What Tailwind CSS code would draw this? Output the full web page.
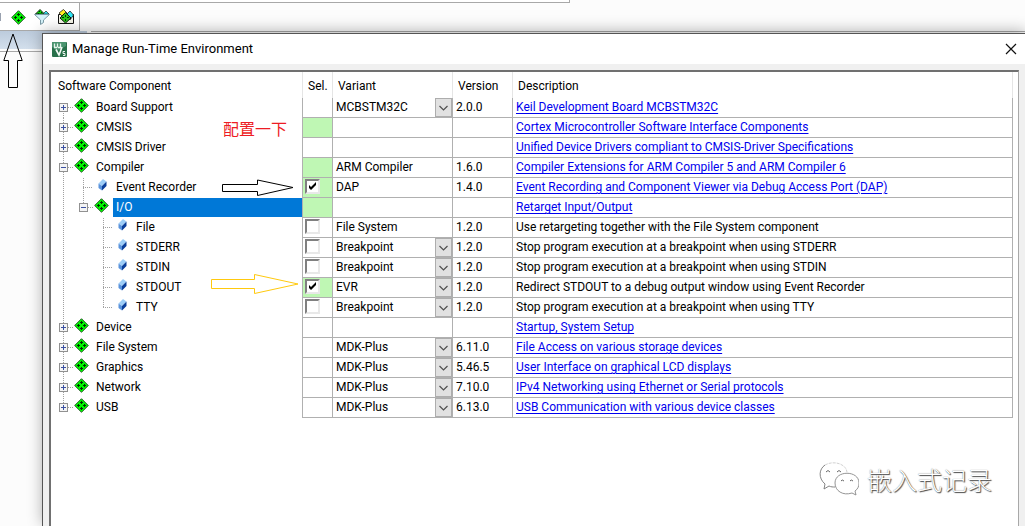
<!DOCTYPE html>
<html lang="en">
<head>
<meta charset="utf-8">
<title>Manage Run-Time Environment</title>
<script src="https://cdn.jsdelivr.net/npm/@tailwindcss/browser@4"></script>
</head>
<body class="relative h-screen overflow-hidden bg-[#fcfcfc] font-['Roboto','Noto_Sans_CJK_SC',sans-serif] text-xs text-black">

<svg class="hidden" aria-hidden="true">
  <symbol id="pack" viewBox="0 0 15 15">
    <path d="M7.5 .7 14.3 7.5 7.5 14.3 .7 7.5Z" fill="#00f800" stroke="#2c5c2c" stroke-width="1"/>
    <path d="M7 3h1v1h1v1H8v1H7V5H6V4h1zM4 6h1v1h1v1H5v1H4V8H3V7h1zM10 6h1v1h1v1h-1v1h-1V8H9V7h1zM7 9h1v1h1v1H8v1H7v-1H6v-1h1z" fill="#003000"/>
  </symbol>
  <symbol id="leaf" viewBox="0 0 9 12">
    <path d="M5 0 8.500 2.500 4 7 .5 4.500Z" fill="#9ccdf8"/>
    <path d="M.5 4.500 4 7v4.500L.5 9Z" fill="#5a93dc"/>
    <path d="M8.500 2.500V7L4 11.500V7Z" fill="#0a3f9c"/>
  </symbol>
  <symbol id="box" viewBox="0 0 9 9">
    <rect x=".5" y=".5" width="8" height="8" fill="#f4f4f4" stroke="#919191"/>
    <path d="M2 4.500h5" stroke="#3b50a0"/>
  </symbol>
  <symbol id="first" viewBox="0 0 20 20">
    <path d="M10.500 15v5M15 9.500h5" stroke="#a0a0a0" stroke-dasharray="1 1"/>
    <use href="#box" x="6" y="5" width="9" height="9"/><path d="M10.500 7v5" stroke="#3b50a0"/>
  </symbol>
  <symbol id="plus" viewBox="0 0 20 20">
    <path d="M10.500 0v20M15 9.500h5" stroke="#a0a0a0" stroke-dasharray="1 1"/>
    <use href="#box" x="6" y="5" width="9" height="9"/><path d="M10.500 7v5" stroke="#3b50a0"/>
  </symbol>
  <symbol id="last" viewBox="0 0 20 20">
    <path d="M10.500 0v5M15 9.500h5" stroke="#a0a0a0" stroke-dasharray="1 1"/>
    <use href="#box" x="6" y="5" width="9" height="9"/><path d="M10.500 7v5" stroke="#3b50a0"/>
  </symbol>
  <symbol id="minus" viewBox="0 0 20 20">
    <path d="M10.500 0v20M15 9.500h5" stroke="#a0a0a0" stroke-dasharray="1 1"/>
    <use href="#box" x="6" y="5" width="9" height="9"/>
  </symbol>
  <symbol id="minusend" viewBox="0 0 20 20">
    <path d="M10.500 0v5M15 9.500h5" stroke="#a0a0a0" stroke-dasharray="1 1"/>
    <use href="#box" x="6" y="5" width="9" height="9"/>
  </symbol>
  <symbol id="line" viewBox="0 0 20 20"><path d="M10.500 0v20" stroke="#a0a0a0" stroke-dasharray="1 1"/></symbol>
  <symbol id="tee" viewBox="0 0 20 20"><path d="M10.500 0v20M10 9.500h10" stroke="#a0a0a0" stroke-dasharray="1 1"/></symbol>
  <symbol id="elbow" viewBox="0 0 20 20"><path d="M10.500 0v10M10 9.500h10" stroke="#a0a0a0" stroke-dasharray="1 1"/></symbol>
  <symbol id="ipack" viewBox="0 0 20 20"><use href="#pack" x="1" y="0" width="15" height="15"/></symbol>
  <symbol id="ileaf" viewBox="0 0 20 20"><use href="#leaf" x="5" y="1" width="9" height="12"/></symbol>
  <symbol id="drop" viewBox="0 0 17 20">
    <rect x=".5" y=".5" width="16" height="18" fill="#e1e1e1" stroke="#adadad"/>
    <path d="M4.500 8 8.500 12 12.500 8" fill="none" stroke="#505050" stroke-width="1.200"/>
  </symbol>
</svg>

<!-- IDE main window behind the dialog -->
<div class="h-[3px] w-[570px] border-r border-b border-[#a8a8a8] bg-white"></div>
<div class="flex h-7 w-20 items-center gap-2 border-r border-b border-[#a8a8a8] bg-white">
  <span class="h-2 w-px bg-gray-400"></span>
  <button class="ml-[2px] pt-px" aria-label="Manage Run-Time Environment"><svg class="size-[15px]"><use href="#pack"/></svg></button>
  <button aria-label="Select Software Packs"><svg class="size-4" viewBox="0 0 16 16">
    <path d="M6 .5 10.500 5H1.500Z" fill="#00e000" stroke="#222"/><path d="M12 2 15 5H9Z" fill="#30e8f8" stroke="#222" stroke-width=".7"/>
    <path d="M5 2h1v1H5zM7 3h1v1H7zM4 4h1v1H4z" fill="#030"/>
    <path d="M.5 5.500h15L9.500 11v2.500L6.500 15.500V11Z" fill="#d4f2fa" stroke="#7b9ba6"/></svg></button>
  <button aria-label="Pack Installer"><svg class="size-4" viewBox="0 0 16 16">
    <path d="M.5 5.500h15v9H.5Z" fill="#f4f4e8" stroke="#111"/>
    <path d="M5.500 .5 9 4 5 8 1 4Z" fill="#ffee20" stroke="#222" stroke-width=".8"/><path d="M12 2 15.500 6 12 11 8 6Z" fill="#30e8f8" stroke="#222" stroke-width=".8"/>
    <path d="M7.500 3.500 13 9 7.500 14 2 9Z" fill="#28c818" stroke="#111"/><path d="M7 6h1v2H7zM4 8h2v1H4zM9 8h2v1H9zM7 10h1v2H7z" fill="#030"/></svg></button>
</div>
<div class="flex h-[18px] items-start"><div class="h-full w-[87px] bg-linear-to-b from-[#bccbdc] to-[#d3dfec]"></div><div class="ml-1 h-px flex-1 bg-[#a8a8a8]"></div></div>
<div class="mt-[2px] h-px bg-[#a8a8a8]"></div>

<!-- Dialog -->
<main class="absolute top-[33px] -right-px bottom-0 left-[42px] flex flex-col border-t border-l border-[#555] bg-[#f0f0f0] shadow-[0_-2px_14px_rgba(0,0,0,0.3)]">
  <header class="flex h-[30px] items-center bg-white pr-[9px] pl-[9px]">
    <svg class="size-[15px]" viewBox="0 0 15 15"><rect width="15" height="15" rx="1" fill="#28704a"/><path d="M0 1a1 1 0 0 1 1-1h13v4L5 9 0 5Z" fill="#4b9470"/><path d="M2.500 1.500v3.500M5.500 1.500v4M8.500 1.500v3.500M2 5.500h3M6 5.500h3" fill="none" stroke="#e6f4ec" stroke-width="1.300"/><path d="M4 7.500 7 13 10 5" fill="none" stroke="#f4faf6" stroke-width="1.600"/><path d="M13 9.500h-2v2h2v2h-2" fill="none" stroke="#fff" stroke-width=".9"/></svg>
    <h1 class="ml-[5px] text-[13px]">Manage Run-Time Environment</h1>
    <button class="ml-auto" aria-label="Close"><svg class="size-3" viewBox="0 0 12 12"><path d="M1 1 11 11M11 1 1 11" stroke="#111" stroke-width="1.200"/></svg></button>
  </header>
  <section class="mt-[6px] mr-[7px] ml-[6px] flex-1 border-t-2 border-r border-l-2 border-t-[#707070] border-r-[#a8a8a8] border-l-[#707070] bg-white pr-[5px]">
    <table class="w-full table-fixed border-separate border-spacing-0 leading-[18px] whitespace-nowrap [&_a]:text-[#0000ee] [&_a]:underline [&_a]:underline-offset-2 [&_svg]:shrink-0 [&_tbody_td]:h-5 [&_tbody_td]:border-b [&_tbody_td]:border-l [&_tbody_td]:border-[#b0b0b0] [&_tbody_td]:p-0 [&_tbody_td]:pl-[3px] [&_tbody_td]:align-top [&_tbody_td:last-child]:border-r [&_tbody_th]:h-5 [&_tbody_th]:p-0 [&_tbody_th]:pl-[2px] [&_tbody_th]:text-left [&_tbody_th]:font-normal [&_th_svg]:size-5 [&_th>div]:flex [&_th_span]:pl-[3px] [&_select]:col-start-1 [&_select]:row-start-1 [&_select]:h-[18px] [&_select]:appearance-none [&_select]:pr-5 [&_td>div]:grid [&_td>div]:h-[19px] [&_td>div>svg]:pointer-events-none [&_td>div>svg]:col-start-1 [&_td>div>svg]:row-start-1 [&_td>div>svg]:h-5 [&_td>div>svg]:w-[17px] [&_td>div>svg]:justify-self-end [&_input]:block [&_input]:size-[15px] [&_input]:appearance-none [&_input]:border-2 [&_input]:border-t-[#808080] [&_input]:border-l-[#808080] [&_input]:border-r-[#e8e8e8] [&_input]:border-b-[#e8e8e8] [&_input]:bg-white [&_label]:-ml-px [&_label]:mt-px [&_label]:grid [&_label]:w-[15px] [&_label>*]:col-start-1 [&_label>*]:row-start-1 [&_label>svg]:size-[15px] [&_label>svg]:pointer-events-none">
      <colgroup><col class="w-[251px]"><col class="w-[30px]"><col class="w-[120px]"><col class="w-[60px]"><col></colgroup>
      <thead>
        <tr class="h-[26px] [&>th]:border-[#e5e5e5] [&>th]:p-0 [&>th]:pt-px [&>th]:text-left [&>th]:font-normal">
          <th class="indent-[7px]">Software Component</th><th class="border-l indent-[5px]">Sel.</th><th class="border-l indent-[5px]">Variant</th><th class="border-l indent-[5px]">Version</th><th class="border-x indent-[5px]">Description</th>
        </tr>
      </thead>
      <tbody>
        <tr><th scope="row"><div><svg><use href="#first"/></svg><svg><use href="#ipack"/></svg><span>Board Support</span></div></th><td></td><td><div><select aria-label="Board Support variant"><option>MCBSTM32C</option></select><svg><use href="#drop"/></svg></div></td><td>2.0.0</td><td><a href="#">Keil Development Board MCBSTM32C</a></td></tr>
        <tr><th scope="row"><div><svg><use href="#plus"/></svg><svg><use href="#ipack"/></svg><span>CMSIS</span></div></th><td class="bg-[#bff7b4]"></td><td></td><td></td><td><a href="#">Cortex Microcontroller Software Interface Components</a></td></tr>
        <tr><th scope="row"><div><svg><use href="#plus"/></svg><svg><use href="#ipack"/></svg><span>CMSIS Driver</span></div></th><td></td><td></td><td></td><td><a href="#">Unified Device Drivers compliant to CMSIS-Driver Specifications</a></td></tr>
        <tr><th scope="row"><div><svg><use href="#minus"/></svg><svg><use href="#ipack"/></svg><span>Compiler</span></div></th><td class="bg-[#bff7b4]"></td><td>ARM Compiler</td><td>1.6.0</td><td><a href="#">Compiler Extensions for ARM Compiler 5 and ARM Compiler 6</a></td></tr>
        <tr><th scope="row"><div><svg><use href="#line"/></svg><svg><use href="#tee"/></svg><svg><use href="#ileaf"/></svg><span>Event Recorder</span></div></th><td class="bg-[#bff7b4]"><label><input type="checkbox" checked aria-label="Event Recorder"><svg viewBox="0 0 15 15"><path d="M4 6v3l2 2 5-5V3L6 8Z"/></svg></label></td><td>DAP</td><td>1.4.0</td><td><a href="#">Event Recording and Component Viewer via Debug Access Port (DAP)</a></td></tr>
        <tr><th scope="row"><div><svg><use href="#line"/></svg><svg><use href="#minusend"/></svg><svg><use href="#ipack"/></svg><span class="h-[19px] flex-1 bg-[#0078d7] text-white">I/O</span></div></th><td class="bg-[#bff7b4]"></td><td></td><td></td><td><a href="#">Retarget Input/Output</a></td></tr>
        <tr><th scope="row"><div><svg><use href="#line"/></svg><svg></svg><svg><use href="#tee"/></svg><svg><use href="#ileaf"/></svg><span>File</span></div></th><td><label><input type="checkbox" aria-label="File"></label></td><td>File System</td><td>1.2.0</td><td>Use retargeting together with the File System component</td></tr>
        <tr><th scope="row"><div><svg><use href="#line"/></svg><svg></svg><svg><use href="#tee"/></svg><svg><use href="#ileaf"/></svg><span>STDERR</span></div></th><td><label><input type="checkbox" aria-label="STDERR"></label></td><td><div><select aria-label="STDERR variant"><option>Breakpoint</option></select><svg><use href="#drop"/></svg></div></td><td>1.2.0</td><td>Stop program execution at a breakpoint when using STDERR</td></tr>
        <tr><th scope="row"><div><svg><use href="#line"/></svg><svg></svg><svg><use href="#tee"/></svg><svg><use href="#ileaf"/></svg><span>STDIN</span></div></th><td><label><input type="checkbox" aria-label="STDIN"></label></td><td><div><select aria-label="STDIN variant"><option>Breakpoint</option></select><svg><use href="#drop"/></svg></div></td><td>1.2.0</td><td>Stop program execution at a breakpoint when using STDIN</td></tr>
        <tr><th scope="row"><div><svg><use href="#line"/></svg><svg></svg><svg><use href="#tee"/></svg><svg><use href="#ileaf"/></svg><span>STDOUT</span></div></th><td class="bg-[#bff7b4]"><label><input type="checkbox" checked aria-label="STDOUT"><svg viewBox="0 0 15 15"><path d="M4 6v3l2 2 5-5V3L6 8Z"/></svg></label></td><td><div><select aria-label="STDOUT variant"><option>EVR</option></select><svg><use href="#drop"/></svg></div></td><td>1.2.0</td><td>Redirect STDOUT to a debug output window using Event Recorder</td></tr>
        <tr><th scope="row"><div><svg><use href="#line"/></svg><svg></svg><svg><use href="#elbow"/></svg><svg><use href="#ileaf"/></svg><span>TTY</span></div></th><td><label><input type="checkbox" aria-label="TTY"></label></td><td><div><select aria-label="TTY variant"><option>Breakpoint</option></select><svg><use href="#drop"/></svg></div></td><td>1.2.0</td><td>Stop program execution at a breakpoint when using TTY</td></tr>
        <tr><th scope="row"><div><svg><use href="#plus"/></svg><svg><use href="#ipack"/></svg><span>Device</span></div></th><td></td><td></td><td></td><td><a href="#">Startup, System Setup</a></td></tr>
        <tr><th scope="row"><div><svg><use href="#plus"/></svg><svg><use href="#ipack"/></svg><span>File System</span></div></th><td></td><td><div><select aria-label="File System variant"><option>MDK-Plus</option></select><svg><use href="#drop"/></svg></div></td><td>6.11.0</td><td><a href="#">File Access on various storage devices</a></td></tr>
        <tr><th scope="row"><div><svg><use href="#plus"/></svg><svg><use href="#ipack"/></svg><span>Graphics</span></div></th><td></td><td><div><select aria-label="Graphics variant"><option>MDK-Plus</option></select><svg><use href="#drop"/></svg></div></td><td>5.46.5</td><td><a href="#">User Interface on graphical LCD displays</a></td></tr>
        <tr><th scope="row"><div><svg><use href="#plus"/></svg><svg><use href="#ipack"/></svg><span>Network</span></div></th><td></td><td><div><select aria-label="Network variant"><option>MDK-Plus</option></select><svg><use href="#drop"/></svg></div></td><td>7.10.0</td><td><a href="#">IPv4 Networking using Ethernet or Serial protocols</a></td></tr>
        <tr><th scope="row"><div><svg><use href="#last"/></svg><svg><use href="#ipack"/></svg><span>USB</span></div></th><td></td><td><div><select aria-label="USB variant"><option>MDK-Plus</option></select><svg><use href="#drop"/></svg></div></td><td>6.13.0</td><td><a href="#">USB Communication with various device classes</a></td></tr>
      </tbody>
    </table>
  </section>
</main>

<!-- Annotations drawn over the windows -->
<svg class="absolute top-[33px] left-[3px] h-[56px] w-[20px]" viewBox="0 0 20 56"><path d="M10 1 .8 27.500H5.500V54.500H14.500V27.500H19.200Z" fill="none" stroke="#000"/></svg>
<p class="absolute top-[117px] left-[223px] font-['Noto_Sans_CJK_SC',sans-serif] text-base leading-[22px] text-[#ed1c24]">配置一下</p>
<svg class="absolute top-[179px] left-[222px] h-[18px] w-[72px]" viewBox="0 0 72 18"><path d="M.5 5.500H35.500V1L71 8.500 35.500 16.500V12.500H.5Z" fill="#fff" stroke="#000"/></svg>
<svg class="absolute top-[273px] left-[211px] h-[22px] w-[88px]" viewBox="0 0 88 22"><path d="M.5 6.500H43.500V1.500L87 11 43.500 20.500V15.500H.5Z" fill="#fff" stroke="#ffc90e"/></svg>
<div class="absolute top-[461px] right-[33px] flex items-center gap-2">
  <svg class="h-9 w-10" viewBox="0 0 40 36"><g fill="none" stroke="#888" stroke-width=".9"><path d="M16 26c-2 0-4 0-6-1l-5 3 1-5C-1 17 0 8 6 4" stroke="#777"/><path d="M6 4c9-5 21-1 22 7" stroke="#ccc" stroke-dasharray="3 1"/><path d="M16 22c0-13 24-13 24 0 0 3-1 6-4 8l1 4-4-2c-9 3-17-2-17-10Z" fill="#fff"/><path d="M7 11q2-3 4 0M18 11q2-3 4 0M22 20q1-2 3 0M31 20q1-2 3 0" stroke="#555"/></g></svg>
  <span class="font-['Noto_Sans_CJK_SC',sans-serif] text-[25px] leading-9 font-light text-white [text-shadow:1px_1px_1px_#444,0_0_1px_#777]">嵌入式记录</span>
</div>
</body>
</html>
